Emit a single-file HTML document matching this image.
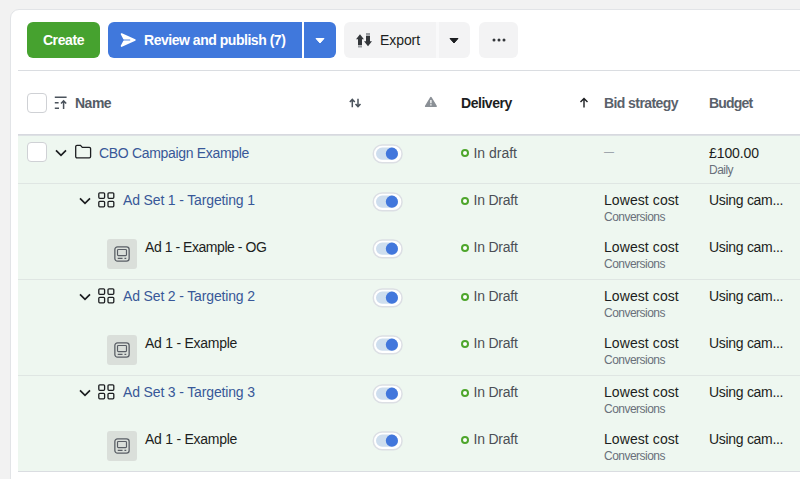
<!DOCTYPE html>
<html><head><meta charset="utf-8">
<style>
*{box-sizing:border-box;margin:0;padding:0}
html,body{width:800px;height:479px;overflow:hidden;background:#f2f2f2;font-family:"Liberation Sans",sans-serif;}
.card{position:absolute;left:10px;top:9px;width:800px;height:480px;background:#fff;border:1px solid #e2e4e7;border-radius:9px 0 0 0;}
.abs{position:absolute}
.btn{position:absolute;top:22px;height:36px;border-radius:6px;font-weight:bold;font-size:14px;letter-spacing:-.4px;line-height:36px;color:#fff;white-space:nowrap}
.t{position:absolute;white-space:nowrap;line-height:20px}
.hline{position:absolute;left:18px;right:0;height:1px}
.row{position:absolute;left:18px;right:0;background:#eef7f0}
.cb{position:absolute;left:27px;width:20px;height:20px;border:1px solid #cfd1d5;border-radius:4px;background:#fff}
.tg{position:absolute;left:372.500px;width:30.300px;height:19.400px;border-radius:10px;background:#fff;border:1.500px solid #dadde2}
.tg i{position:absolute;left:2px;top:2.100px;width:22.200px;height:12.200px;border-radius:6.100px;background:#cedeee}
.tg b{position:absolute;left:12px;top:2.100px;width:12.200px;height:12.200px;border-radius:50%;background:#4277dc}
.dot{position:absolute;left:461px;width:8px;height:8px;border-radius:50%;border:2px solid #4ea62c;background:#fff}
.nm{font-size:14px;color:#385898;letter-spacing:-.15px}
.ad{font-size:14px;color:#1c1e21;letter-spacing:-.26px}
.st{font-size:14px;letter-spacing:-.22px;color:#4b4f56;left:473.500px}
.bs{font-size:14px;letter-spacing:.08px;color:#1c1e21;left:604px}
.sub{font-size:12px;letter-spacing:-.52px;color:#69707a;left:604px}
.bu{font-size:14px;letter-spacing:-.3px;color:#1c1e21;left:709px}
.th{position:absolute;left:107px;width:30px;height:30px;border-radius:3px;background:#dadfda}
</style></head><body>
<div class="card"></div>

<!-- toolbar -->
<div class="btn" style="left:27px;width:73px;background:#46a22f;text-align:center">Create</div>
<div class="btn" style="left:108px;width:194px;background:#4078dc;border-radius:6px 0 0 6px;padding-left:36px;letter-spacing:-.47px">Review and publish (7)</div>
<svg class="abs" style="left:119px;top:32px" width="18" height="16" viewBox="0 0 18 16"><path d="M2.600 2 L15.900 8 L2.600 14 L5.800 8 Z" fill="#fff" stroke="#fff" stroke-width="1.700" stroke-linejoin="round"/><path d="M4 8H10.800" stroke="#4078dc" stroke-width=".9" stroke-linecap="round"/></svg>
<div class="btn" style="left:304px;width:32px;background:#4078dc;border-radius:0 6px 6px 0"></div>
<svg class="abs" style="left:315px;top:38px" width="10" height="6" viewBox="0 0 10 6"><path d="M1 0.5h8L5 5z" fill="#fff" stroke="#fff" stroke-linejoin="round"/></svg>

<div class="btn" style="left:344px;width:92px;background:#f3f3f4;color:#1c1e21;font-weight:normal;font-size:14px;letter-spacing:-.08px;border-radius:6px 0 0 6px;padding-left:36px">Export</div>
<div class="abs" style="left:436px;top:22px;width:3px;height:36px;background:#f9f9fa"></div><div class="btn" style="left:438.500px;width:31.500px;background:#f3f3f4;border-radius:0 6px 6px 0"></div>
<svg class="abs" style="left:449px;top:38px" width="10" height="6" viewBox="0 0 10 6"><path d="M1 0.5h8L5 5z" fill="#1c1e21" stroke="#1c1e21" stroke-linejoin="round"/></svg>
<div class="btn" style="left:478.500px;width:39.800px;background:#f3f3f4"></div>
<svg class="abs" style="left:491.500px;top:38.100px" width="14" height="4" viewBox="0 0 14 4"><circle cx="2" cy="2" r="1.500" fill="#34373b"/><circle cx="7" cy="2" r="1.500" fill="#34373b"/><circle cx="12" cy="2" r="1.500" fill="#34373b"/></svg>
<svg class="abs" style="left:355px;top:32px" width="18" height="16" viewBox="0 0 18 16"><path d="M5 2.200L1 7.200H3V13H7V7.200H8.900z" fill="#34373b"/><rect x="3" y="13.300" width="4" height="2.200" fill="#9a9da1"/><path d="M11 3.800h4V9.300h2L13 14.200 9 9.300h2z" fill="#34373b"/><rect x="11" y="1" width="4" height="2.500" fill="#9a9da1"/></svg>

<div class="hline" style="top:70px;background:#dadde1"></div>

<!-- header -->
<div class="cb" style="top:93px"></div>
<svg class="abs" style="left:54px;top:96px" width="14" height="14" viewBox="0 0 14 14"><path d="M.8 1.300h11.800M.8 6.800h3.800M.8 12.200h4.200" stroke="#4b535c" stroke-width="1.500" fill="none"/><path d="M9.600 13V5M7 7.600L9.600 4.900 12.200 7.600" stroke="#4b535c" stroke-width="1.500" fill="none"/></svg>
<div class="t" style="left:75px;top:92.800px;font-weight:bold;font-size:14px;letter-spacing:-.5px;color:#555c66">Name</div>
<svg class="abs" style="left:349px;top:98px" width="13" height="10" viewBox="0 0 13 10"><path d="M3.300 9.300V1.600M.8 4L3.300 1.400 5.800 4M9 .7V8.400M6.500 6L9 8.600 11.500 6" stroke="#4b535c" stroke-width="1.500" fill="none"/></svg>
<svg class="abs" style="left:424px;top:96px" width="14" height="12" viewBox="0 0 14 12"><path d="M6.900 1.800L12 10.200H1.800z" fill="#8b9096" stroke="#8b9096" stroke-width="1.800" stroke-linejoin="round"/><path d="M6.900 4v3.300M6.900 8.300v1.200" stroke="#fff" stroke-width="1.300"/></svg>
<div class="t" style="left:461px;top:92.800px;font-weight:bold;font-size:14px;letter-spacing:-.46px;color:#1c1e21">Delivery</div>
<svg class="abs" style="left:578.700px;top:97.400px" width="10" height="11" viewBox="0 0 10 11"><path d="M5 10.5V1.5M1.5 5L5 1.5 8.500 5" stroke="#1c1e21" stroke-width="1.4" fill="none"/></svg>
<div class="t" style="left:604px;top:92.800px;font-weight:bold;font-size:14px;letter-spacing:-.58px;color:#5a616b">Bid strategy</div>
<div class="t" style="left:709px;top:92.800px;font-weight:bold;font-size:14px;letter-spacing:-.8px;color:#5a616b">Budget</div>

<!-- rows -->
<div class="row" style="top:134px;height:338px"></div>
<div class="hline" style="top:134px;background:#d7d9df;height:1px"></div><div class="hline" style="top:135px;background:#dde1e4;height:1px"></div>
<div class="hline" style="top:183px;background:#dfe6e3"></div>
<div class="hline" style="top:279px;background:#dfe6e3"></div>
<div class="hline" style="top:375px;background:#dfe6e3"></div>
<div class="hline" style="top:471px;background:#dadde1"></div>

<!-- campaign row -->
<div class="cb" style="top:142px"></div>
<svg class="abs" style="left:55px;top:148.500px" width="12" height="8" viewBox="0 0 12 8"><path d="M1 1.300L6 6.300l5-5" stroke="#1c1e21" stroke-width="1.700" fill="none"/></svg>
<svg class="abs" style="left:74px;top:144.300px" width="18" height="15" viewBox="0 0 18 15"><path d="M1.700 2.700a1.300 1.300 0 0 1 1.300-1.300h3.500l1.800 2h7a1.300 1.300 0 0 1 1.300 1.300v7.800a1.300 1.300 0 0 1-1.300 1.300H3a1.300 1.300 0 0 1-1.300-1.300z" stroke="#1c1e21" stroke-width="1.3" fill="none"/></svg>
<div class="t nm" style="left:99px;top:142.700px;letter-spacing:-.32px">CBO Campaign Example</div>
<svg class="abs" style="left:372px;top:144px" width="32" height="20" viewBox="0 0 32 20"><rect x="1.250" y=".95" width="28.800" height="17.900" rx="8.950" fill="#fff" stroke="#dcdfe4" stroke-width="1.500"/><rect x="4" y="3.600" width="22" height="12.200" rx="6.100" fill="#cedeee"/><circle cx="19.900" cy="9.700" r="6.100" fill="#4277dc"/></svg>
<div class="dot" style="top:149.300px"></div>
<div class="t st" style="top:142.700px;letter-spacing:-.02px">In draft</div>
<div class="t" style="left:604px;top:142px;font-size:10px;color:#8d949e">—</div>
<div class="t bu" style="top:142.700px;letter-spacing:-.09px">£100.00</div>
<div class="t sub" style="left:709px;top:160px">Daily</div>


<svg class="abs" style="left:79px;top:197px" width="12" height="8" viewBox="0 0 12 8"><path d="M1 1.300L6 6.300l5-5" stroke="#1c1e21" stroke-width="1.700" fill="none"/></svg>
<svg class="abs" style="left:98.200px;top:192px" width="17" height="16" viewBox="0 0 17 16"><g stroke="#1c1e21" stroke-width="1.300" fill="none"><rect x=".8" y=".8" width="5.800" height="5.500" rx="1"/><rect x="10" y=".8" width="5.800" height="5.500" rx="1"/><rect x=".8" y="9.300" width="5.800" height="5.500" rx="1"/><rect x="10" y="9.300" width="5.800" height="5.500" rx="1"/></g></svg>
<div class="t nm" style="left:123px;top:190.4px">Ad Set 1 - Targeting 1</div>
<svg class="abs" style="left:372px;top:192px" width="32" height="20" viewBox="0 0 32 20"><rect x="1.250" y=".95" width="28.800" height="17.900" rx="8.950" fill="#fff" stroke="#dcdfe4" stroke-width="1.500"/><rect x="4" y="3.600" width="22" height="12.200" rx="6.100" fill="#cedeee"/><circle cx="19.900" cy="9.700" r="6.100" fill="#4277dc"/></svg>
<div class="dot" style="top:197px"></div>
<div class="t st" style="top:190.4px">In Draft</div>
<div class="t bs" style="top:190.4px">Lowest cost</div>
<div class="t sub" style="top:207.4px">Conversions</div>
<div class="t bu" style="top:190.4px">Using cam...</div>

<div class="th" style="top:239px"></div>
<svg class="abs" style="left:113.700px;top:246.3px" width="16" height="16" viewBox="0 0 15 15"><rect x=".8" y=".8" width="13.400" height="13.400" rx="2.500" stroke="#5a5f66" stroke-width="1.200" fill="none"/><rect x="3.300" y="3.300" width="8.400" height="5.800" rx=".8" stroke="#5a5f66" stroke-width="1.100" fill="none"/><path d="M3.500 11.500h4.500M9.800 11.500h1.700" stroke="#5a5f66" stroke-width="1.200"/></svg>
<div class="t ad" style="left:145px;top:237.4px;letter-spacing:-.45px">Ad 1 - Example - OG</div>
<svg class="abs" style="left:372px;top:239px" width="32" height="20" viewBox="0 0 32 20"><rect x="1.250" y=".95" width="28.800" height="17.900" rx="8.950" fill="#fff" stroke="#dcdfe4" stroke-width="1.500"/><rect x="4" y="3.600" width="22" height="12.200" rx="6.100" fill="#cedeee"/><circle cx="19.900" cy="9.700" r="6.100" fill="#4277dc"/></svg>
<div class="dot" style="top:244px"></div>
<div class="t st" style="top:237.4px">In Draft</div>
<div class="t bs" style="top:237.4px">Lowest cost</div>
<div class="t sub" style="top:254.4px">Conversions</div>
<div class="t bu" style="top:237.4px">Using cam...</div>

<svg class="abs" style="left:79px;top:293px" width="12" height="8" viewBox="0 0 12 8"><path d="M1 1.300L6 6.300l5-5" stroke="#1c1e21" stroke-width="1.700" fill="none"/></svg>
<svg class="abs" style="left:98.200px;top:288px" width="17" height="16" viewBox="0 0 17 16"><g stroke="#1c1e21" stroke-width="1.300" fill="none"><rect x=".8" y=".8" width="5.800" height="5.500" rx="1"/><rect x="10" y=".8" width="5.800" height="5.500" rx="1"/><rect x=".8" y="9.300" width="5.800" height="5.500" rx="1"/><rect x="10" y="9.300" width="5.800" height="5.500" rx="1"/></g></svg>
<div class="t nm" style="left:123px;top:286.4px">Ad Set 2 - Targeting 2</div>
<svg class="abs" style="left:372px;top:288px" width="32" height="20" viewBox="0 0 32 20"><rect x="1.250" y=".95" width="28.800" height="17.900" rx="8.950" fill="#fff" stroke="#dcdfe4" stroke-width="1.500"/><rect x="4" y="3.600" width="22" height="12.200" rx="6.100" fill="#cedeee"/><circle cx="19.900" cy="9.700" r="6.100" fill="#4277dc"/></svg>
<div class="dot" style="top:293px"></div>
<div class="t st" style="top:286.4px">In Draft</div>
<div class="t bs" style="top:286.4px">Lowest cost</div>
<div class="t sub" style="top:303.4px">Conversions</div>
<div class="t bu" style="top:286.4px">Using cam...</div>

<div class="th" style="top:335px"></div>
<svg class="abs" style="left:113.700px;top:342.3px" width="16" height="16" viewBox="0 0 15 15"><rect x=".8" y=".8" width="13.400" height="13.400" rx="2.500" stroke="#5a5f66" stroke-width="1.200" fill="none"/><rect x="3.300" y="3.300" width="8.400" height="5.800" rx=".8" stroke="#5a5f66" stroke-width="1.100" fill="none"/><path d="M3.500 11.500h4.500M9.800 11.500h1.700" stroke="#5a5f66" stroke-width="1.200"/></svg>
<div class="t ad" style="left:145px;top:333.4px">Ad 1 - Example</div>
<svg class="abs" style="left:372px;top:335px" width="32" height="20" viewBox="0 0 32 20"><rect x="1.250" y=".95" width="28.800" height="17.900" rx="8.950" fill="#fff" stroke="#dcdfe4" stroke-width="1.500"/><rect x="4" y="3.600" width="22" height="12.200" rx="6.100" fill="#cedeee"/><circle cx="19.900" cy="9.700" r="6.100" fill="#4277dc"/></svg>
<div class="dot" style="top:340px"></div>
<div class="t st" style="top:333.4px">In Draft</div>
<div class="t bs" style="top:333.4px">Lowest cost</div>
<div class="t sub" style="top:350.4px">Conversions</div>
<div class="t bu" style="top:333.4px">Using cam...</div>

<svg class="abs" style="left:79px;top:389px" width="12" height="8" viewBox="0 0 12 8"><path d="M1 1.300L6 6.300l5-5" stroke="#1c1e21" stroke-width="1.700" fill="none"/></svg>
<svg class="abs" style="left:98.200px;top:384px" width="17" height="16" viewBox="0 0 17 16"><g stroke="#1c1e21" stroke-width="1.300" fill="none"><rect x=".8" y=".8" width="5.800" height="5.500" rx="1"/><rect x="10" y=".8" width="5.800" height="5.500" rx="1"/><rect x=".8" y="9.300" width="5.800" height="5.500" rx="1"/><rect x="10" y="9.300" width="5.800" height="5.500" rx="1"/></g></svg>
<div class="t nm" style="left:123px;top:382.4px">Ad Set 3 - Targeting 3</div>
<svg class="abs" style="left:372px;top:384px" width="32" height="20" viewBox="0 0 32 20"><rect x="1.250" y=".95" width="28.800" height="17.900" rx="8.950" fill="#fff" stroke="#dcdfe4" stroke-width="1.500"/><rect x="4" y="3.600" width="22" height="12.200" rx="6.100" fill="#cedeee"/><circle cx="19.900" cy="9.700" r="6.100" fill="#4277dc"/></svg>
<div class="dot" style="top:389px"></div>
<div class="t st" style="top:382.4px">In Draft</div>
<div class="t bs" style="top:382.4px">Lowest cost</div>
<div class="t sub" style="top:399.4px">Conversions</div>
<div class="t bu" style="top:382.4px">Using cam...</div>

<div class="th" style="top:431px"></div>
<svg class="abs" style="left:113.700px;top:438.3px" width="16" height="16" viewBox="0 0 15 15"><rect x=".8" y=".8" width="13.400" height="13.400" rx="2.500" stroke="#5a5f66" stroke-width="1.200" fill="none"/><rect x="3.300" y="3.300" width="8.400" height="5.800" rx=".8" stroke="#5a5f66" stroke-width="1.100" fill="none"/><path d="M3.500 11.500h4.500M9.800 11.500h1.700" stroke="#5a5f66" stroke-width="1.200"/></svg>
<div class="t ad" style="left:145px;top:429.4px">Ad 1 - Example</div>
<svg class="abs" style="left:372px;top:431px" width="32" height="20" viewBox="0 0 32 20"><rect x="1.250" y=".95" width="28.800" height="17.900" rx="8.950" fill="#fff" stroke="#dcdfe4" stroke-width="1.500"/><rect x="4" y="3.600" width="22" height="12.200" rx="6.100" fill="#cedeee"/><circle cx="19.900" cy="9.700" r="6.100" fill="#4277dc"/></svg>
<div class="dot" style="top:436px"></div>
<div class="t st" style="top:429.4px">In Draft</div>
<div class="t bs" style="top:429.4px">Lowest cost</div>
<div class="t sub" style="top:446.4px">Conversions</div>
<div class="t bu" style="top:429.4px">Using cam...</div>

</body></html>
